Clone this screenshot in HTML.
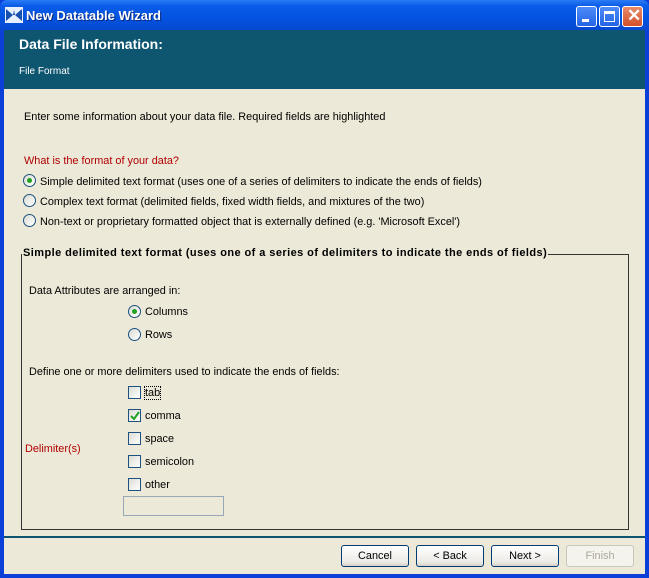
<!DOCTYPE html>
<html><head><meta charset="utf-8"><style>
*{margin:0;padding:0;box-sizing:border-box}
body{width:649px;height:578px;overflow:hidden;font-family:"Liberation Sans",sans-serif;font-size:10.9px;color:#000;background:#0a3fd8}
.a{position:absolute;white-space:nowrap}
#title{left:0;top:0;width:649px;height:30px;background:linear-gradient(#2a7cf6,#0a5ce8 20%,#0353e0 60%,#0748d0);border-radius:7px 7px 0 0}
#title .t{left:26px;top:8px;color:#fff;font-size:13px;font-weight:bold;text-shadow:1px 1px #0a2a80}
.wb{top:6px;width:21px;height:21px;border:1px solid #fff;border-radius:3px;background:linear-gradient(#4d8cf8,#2463e6)}
#body{left:4px;top:30px;width:641px;height:544px;background:#ece9d8}
#hdr{left:4px;top:30px;width:641px;height:59px;background:#0e5570;color:#fff}
.rad{width:13px;height:13px;border:1px solid #1c5180;border-radius:50%;background:linear-gradient(135deg,#dcdcd4,#fff)}
.rad.on::after{content:"";position:absolute;left:3px;top:3px;width:5px;height:5px;border-radius:50%;background:#21a121}
.cb{width:13px;height:13px;border:1px solid #1c5180;background:linear-gradient(135deg,#dcdcd4,#fff)}
.btn{top:545px;width:68px;height:22px;border:1px solid #003c74;border-radius:3px;background:linear-gradient(#fff,#ecebe6 80%,#d6d0c5);text-align:center;line-height:20px}
.red{color:#b00000}
</style></head><body>
<div class="a" id="title">
<svg class="a" style="left:5px;top:7px" width="18" height="16" viewBox="0 0 18 16"><rect width="18" height="16" fill="#e8f0ff"/><path d="M1 2 L8 8 L1 14 Z M17 2 L10 8 L17 14 Z" fill="#1850b0"/><path d="M8 8 L9 3 L10 8 Z" fill="#1850b0"/></svg>
<div class="a t">New Datatable Wizard</div>
<div class="a wb" style="left:576px"><div class="a" style="left:5px;top:12px;width:7px;height:3px;background:#fff"></div></div>
<div class="a wb" style="left:599px"><div class="a" style="left:4px;top:4px;width:11px;height:11px;border:1px solid #fff;border-top-width:3px"></div></div>
<div class="a wb" style="left:622px;background:linear-gradient(#e88a6a,#d5502a)"><div class="a" style="left:4px;top:-1px;color:#fff;font-size:17px;font-weight:bold">✕</div></div>
</div>
<div class="a" id="body"></div>
<div class="a" id="hdr">
<div class="a" style="left:15px;top:6px;font-size:14px;font-weight:bold">Data File Information:</div>
<div class="a" style="left:15px;top:36px;font-size:10px">File Format</div>
</div>
<div class="a" style="left:24px;top:111px">Enter some information about your data file. Required fields are highlighted</div>
<div class="a red" style="left:24px;top:155px">What is the format of your data?</div>
<div class="a rad on" style="left:23px;top:174px"></div><div class="a" style="left:40px;top:176px">Simple delimited text format (uses one of a series of delimiters to indicate the ends of fields)</div>
<div class="a rad" style="left:23px;top:194px"></div><div class="a" style="left:40px;top:196px">Complex text format (delimited fields, fixed width fields, and mixtures of the two)</div>
<div class="a rad" style="left:23px;top:214px"></div><div class="a" style="left:40px;top:216px">Non-text or proprietary formatted object that is externally defined (e.g. 'Microsoft Excel')</div>
<div class="a" style="left:21px;top:254px;width:608px;height:276px;border:1px solid #333"></div>
<div class="a" style="left:22px;top:247px;background:#ece9d8;font-weight:bold;font-size:11px;letter-spacing:0.43px;padding:0 1px">Simple delimited text format (uses one of a series of delimiters to indicate the ends of fields)</div>
<div class="a" style="left:29px;top:285px">Data Attributes are arranged in:</div>
<div class="a rad on" style="left:128px;top:305px"></div><div class="a" style="left:145px;top:306px">Columns</div>
<div class="a rad" style="left:128px;top:328px"></div><div class="a" style="left:145px;top:329px">Rows</div>
<div class="a" style="left:29px;top:366px">Define one or more delimiters used to indicate the ends of fields:</div>
<div class="a cb" style="left:128px;top:386px"></div><div class="a" style="left:145px;top:387px;outline:1px dotted #000">tab</div>
<div class="a cb" style="left:128px;top:409px"><svg class="a" style="left:1px;top:1px" width="10" height="10" viewBox="0 0 10 10"><path d="M1 5 L4 8 L9 1" stroke="#21a121" stroke-width="2" fill="none"/></svg></div><div class="a" style="left:145px;top:410px">comma</div>
<div class="a cb" style="left:128px;top:432px"></div><div class="a" style="left:145px;top:433px">space</div>
<div class="a cb" style="left:128px;top:455px"></div><div class="a" style="left:145px;top:456px">semicolon</div>
<div class="a cb" style="left:128px;top:478px"></div><div class="a" style="left:145px;top:479px">other</div>
<div class="a" style="left:123px;top:496px;width:101px;height:20px;border:1px solid #98a8b8;background:#ece9d8"></div>
<div class="a red" style="left:25px;top:443px">Delimiter(s)</div>
<div class="a" style="left:4px;top:536px;width:641px;height:2px;background:#0e5570"></div>
<div class="a btn" style="left:341px">Cancel</div>
<div class="a btn" style="left:416px">&lt; Back</div>
<div class="a btn" style="left:491px">Next &gt;</div>
<div class="a btn" style="left:566px;border-color:#c9c7ba;color:#aca899;background:#f4f3ee">Finish</div>
</body></html>
